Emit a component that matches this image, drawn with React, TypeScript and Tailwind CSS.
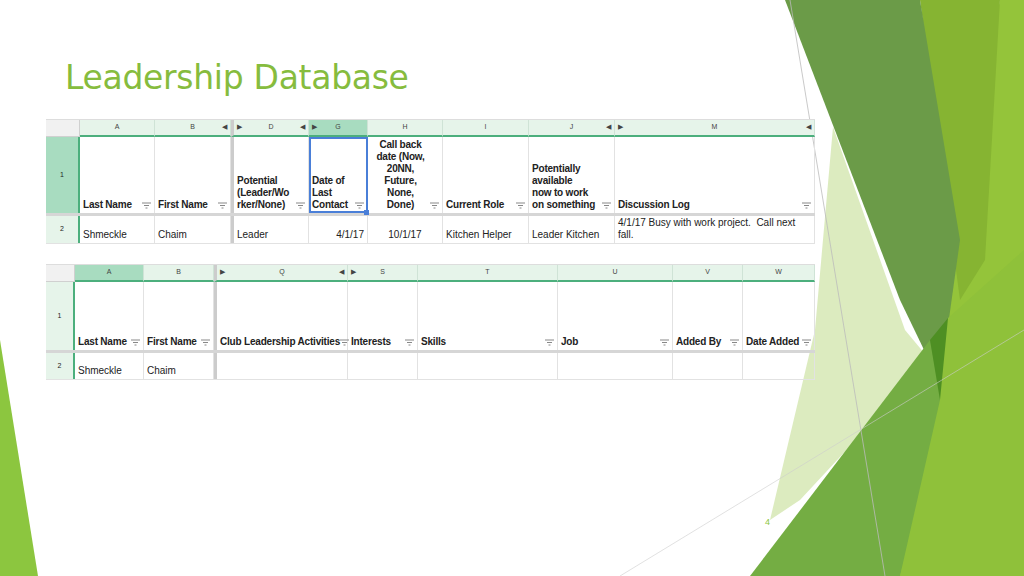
import React from "react";

const F = () => (
  <svg width="9" height="7" viewBox="0 0 9 7" className="shrink-0 mb-[2px]">
    <path d="M0 1h9M2 3.5h5M3.5 6h2" stroke="#888" strokeWidth="1" />
  </svg>
);
const L = () => <span className="text-[7px] leading-none">◀</span>;
const R = () => <span className="text-[7px] leading-none">▶</span>;

type Col = { w: number; letter: string; head: string; val?: string; sel?: boolean; left?: boolean; right?: boolean; gapBefore?: boolean; right2?: boolean };

function Sheet({ rh, cols, h1, h2, rowSel, headerTop }: { rh: number; cols: Col[]; h1: number; h2: number; rowSel: boolean; headerTop?: boolean }) {
  return (
    <div className="flex flex-col w-[769px] text-[10px] text-[#222]" style={{ fontFamily: "Liberation Sans, Arial, sans-serif" }}>
      <div className="flex h-[18px] border-t border-[#ddd]">
        <div className="bg-[#f1f1f1] border-r border-[#d0d0d0] border-b border-[#bbb]" style={{ width: rh }} />
        {cols.map((c, i) => (
          <div key={i} className={`flex items-center justify-center relative text-[7px] text-[#444] border-r border-[#cfe3d6] border-b-2 border-b-[#4caf7d] ${c.sel ? "bg-[#a8dcc0]" : "bg-[#e6f4ea]"} ${c.gapBefore ? "border-l-[3px] border-l-[#ccc]" : ""}`} style={{ width: c.w }}>
            {c.right && <span className="absolute left-[3px]"><R /></span>}
            {c.letter}
            {c.left && <span className="absolute right-[3px]"><L /></span>}
          </div>
        ))}
      </div>
      <div className="flex border-b-[3px] border-[#d6d6d6]" style={{ height: h1 }}>
        <div className={`flex items-center justify-center text-[7px] border-r-2 border-[#4caf7d] ${rowSel ? "bg-[#a8dcc0]" : "bg-[#e6f4ea]"}`} style={{ width: rh }}>1</div>
        {cols.map((c, i) => (
          <div key={i} className={`flex items-end justify-between px-[3px] pb-[2px] border-r border-[#e2e2e2] font-bold text-[10px] leading-[12px] tracking-[-0.2px] ${c.gapBefore ? "border-l-[3px] border-l-[#ccc]" : ""} ${c.sel && headerTop ? "outline outline-2 outline-[#4a7fd8] -outline-offset-2 relative" : ""}`} style={{ width: c.w }}>
            <span className={c.head.includes("Call back") ? "flex-1 whitespace-pre text-center" : "whitespace-pre"}>{c.head}</span>
            <F />
            {c.sel && headerTop && <span className="absolute -right-[2px] -bottom-[2px] w-[5px] h-[5px] bg-[#4a7fd8]" />}
          </div>
        ))}
      </div>
      <div className="flex border-b border-[#e2e2e2]" style={{ height: h2 }}>
        <div className="flex items-center justify-center text-[7px] bg-[#e6f4ea] border-r-2 border-[#4caf7d]" style={{ width: rh }}>2</div>
        {cols.map((c, i) => (
          <div key={i} className={`flex items-end px-[3px] pb-[2px] border-r border-[#e2e2e2] leading-[12px] ${c.gapBefore ? "border-l-[3px] border-l-[#ccc]" : ""} ${c.right2 ? "justify-end" : ""} ${c.letter === "H" ? "justify-center" : ""}`} style={{ width: c.w }}>
            <span className="whitespace-pre">{c.val}</span>
          </div>
        ))}
      </div>
    </div>
  );
}

export default function App() {
  const t1: Col[] = [
    { w: 75, letter: "A", head: "Last Name", val: "Shmeckle" },
    { w: 76, letter: "B", head: "First Name", val: "Chaim", left: true },
    { w: 78, letter: "D", head: "Potential\n(Leader/Wo\nrker/None)", val: "Leader", right: true, left: true, gapBefore: true },
    { w: 59, letter: "G", head: "Date of\nLast\nContact", val: "4/1/17", sel: true, right: true, right2: true },
    { w: 75, letter: "H", head: "Call back\ndate (Now,\n20NN,\nFuture,\nNone,\nDone)", val: "10/1/17" },
    { w: 86, letter: "I", head: "Current Role", val: "Kitchen Helper" },
    { w: 86, letter: "J", head: "Potentially\navailable\nnow to work\non something", val: "Leader Kitchen", left: true },
    { w: 200, letter: "M", head: "Discussion Log", val: "4/1/17 Busy with work project.  Call next\nfall.", right: true, left: true },
  ];
  const t2: Col[] = [
    { w: 69, letter: "A", head: "Last Name", val: "Shmeckle", sel: true },
    { w: 70, letter: "B", head: "First Name", val: "Chaim" },
    { w: 134, letter: "Q", head: "Club Leadership Activities", right: true, left: true, gapBefore: true },
    { w: 70, letter: "S", head: "Interests", right: true },
    { w: 140, letter: "T", head: "Skills" },
    { w: 115, letter: "U", head: "Job" },
    { w: 70, letter: "V", head: "Added By" },
    { w: 72, letter: "W", head: "Date Added" },
  ];
  return (
    <div className="relative w-[1024px] h-[576px] bg-white overflow-hidden">
      <svg className="absolute inset-0" width="1024" height="576" viewBox="0 0 1024 576">
        <polygon points="0,340 38,576 0,576" fill="#8cc63f" />
        <polygon points="833,127 905,330 930,360 800,500 770,520 815,330" fill="#d6e8b4" opacity="0.85" />
        <polygon points="1000,0 1024,0 1024,576 880,576" fill="#94c43a" />
        <polygon points="920,0 1000,0 985,260 960,300" fill="#86b432" />
        <polygon points="785,0 920,0 960,240 940,383 900,300" fill="#6b9b48" />
        <polygon points="750,576 930,340 945,420 900,576" fill="#74ad43" />
        <polygon points="930,340 948,318 950,385 940,400" fill="#4e8f23" />
        <polygon points="948,318 1024,250 1024,576 900,576 940,400" fill="#8fc13a" />
        <line x1="790" y1="0" x2="885" y2="576" stroke="#bbb" strokeWidth="0.8" />
        <line x1="620" y1="576" x2="1024" y2="330" stroke="#ccc" strokeWidth="0.6" />
        <text x="765" y="525" fontSize="9" fill="#8cc63f" fontFamily="Liberation Sans">4</text>
      </svg>
      <div className="relative flex flex-col pl-[46px] pt-[56px]">
        <h1 className="text-[33px] leading-[44px] text-[#86bc3e] pl-[19px]" style={{ fontFamily: "DejaVu Sans, sans-serif", letterSpacing: "-0.3px" }}>Leadership Database</h1>
        <div className="mt-[19px]">
          <Sheet rh={34} cols={t1} h1={79} h2={28} rowSel headerTop />
        </div>
        <div className="mt-[20px]">
          <Sheet rh={29} cols={t2} h1={71} h2={27} rowSel={false} />
        </div>
      </div>
    </div>
  );
}
